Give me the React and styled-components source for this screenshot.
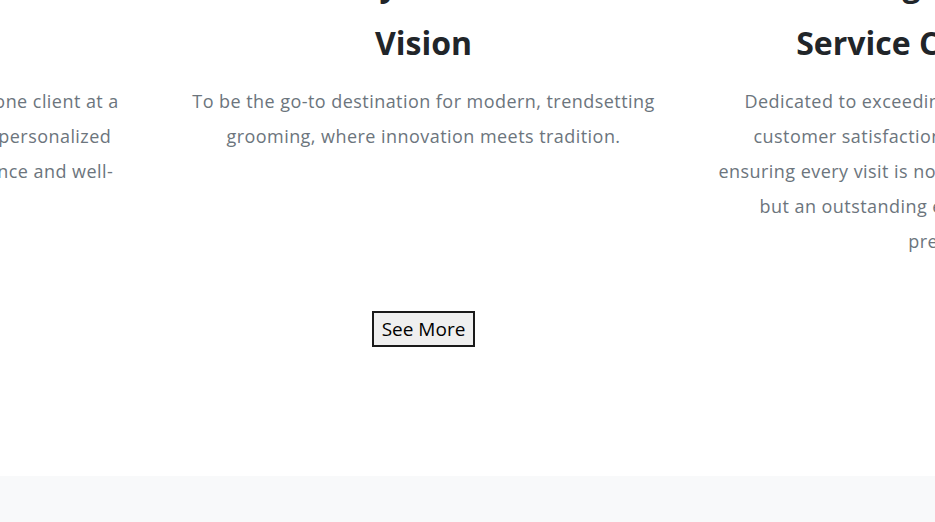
import styled, { createGlobalStyle } from 'styled-components';

const GlobalStyle = createGlobalStyle`
  html, body {
    margin: 0;
    padding: 0;
    background: #ffffff;
    overflow: hidden;
  }
  * {
    box-sizing: border-box;
  }
`;

const AboutSection = styled.section`
  margin-top: -35px; /* 페이지가 조금 스크롤된 상태 */
  padding-bottom: 129px;
  background: #ffffff;
  overflow: hidden;
`;

const Inner = styled.div`
  width: 847px;
`;

const ColumnRow = styled.div`
  display: flex;
  justify-content: center;
`;

const Column = styled.article`
  flex: 0 0 540px;
  min-width: 0;
  padding: 0 25px;
  text-align: center;
`;

const Eyebrow = styled.h3`
  margin: 0 0 21px;
  font-family: 'Open Sans', 'Noto Sans', sans-serif;
  font-size: 32px;
  font-weight: 700;
  line-height: 1.2;
  color: #212529;
  white-space: nowrap;
`;

const Title = styled.h2`
  margin: 0 0 21px;
  font-family: 'Open Sans', 'Noto Sans', sans-serif;
  font-size: 32px;
  font-weight: 700;
  line-height: 1.2;
  color: #212529;
  white-space: nowrap;
`;

const Text = styled.p`
  margin: 0;
  font-family: 'Open Sans', 'Noto Sans', sans-serif;
  font-size: 18px;
  letter-spacing: 0.45px;
  line-height: 35px;
  color: #6c757d;
  white-space: nowrap;
`;

const Actions = styled.div`
  margin-top: 52px;
  display: flex;
  justify-content: center;
`;

const SeeMoreButton = styled.button`
  padding: 4px 8px;
  border: 2px solid #1a1a1a;
  border-radius: 0;
  background: #efefef;
  color: #000000;
  font-family: 'Open Sans', 'Noto Sans', sans-serif;
  font-size: 19px;
  line-height: 24px;
  cursor: pointer;

  &:hover {
    background: #e5e5e5;
  }
`;

const NextSection = styled.section`
  height: 220px;
  background: #f8f9fa;
`;

const columns = [
  {
    eyebrow: 'Our Promise',
    title: 'Mission',
    lines: [
      'To raise the art of grooming by serving one client at a',
      'time, through keen craftsmanship and personalized',
      'service and care that enhances confidence and well-',
      'being.',
    ],
  },
  {
    eyebrow: 'Every Fine Cut',
    title: 'Vision',
    lines: [
      'To be the go-to destination for modern, trendsetting',
      'grooming, where innovation meets tradition.',
    ],
  },
  {
    eyebrow: 'Going Beyond All',
    title: 'Service Commitment',
    lines: [
      'Dedicated to exceeding expectations by providing',
      'customer satisfaction across every single detail,',
      'ensuring every visit is not just an ordinary appointment,',
      'but an outstanding experience that leaves you',
      'presentable.',
    ],
  },
];

function App() {
  return (
    <>
      <GlobalStyle />
      <AboutSection>
        <Inner>
          <ColumnRow>
            {columns.map((col) => (
              <Column key={col.title}>
                <Eyebrow>{col.eyebrow}</Eyebrow>
                <Title>{col.title}</Title>
                <Text>
                  {col.lines.map((line, idx) => (
                    <span key={idx}>
                      {line}
                      <br />
                    </span>
                  ))}
                </Text>
              </Column>
            ))}
          </ColumnRow>
          <Actions>
            <SeeMoreButton>See More</SeeMoreButton>
          </Actions>
        </Inner>
      </AboutSection>
      <NextSection />
    </>
  );
}

export default App;
